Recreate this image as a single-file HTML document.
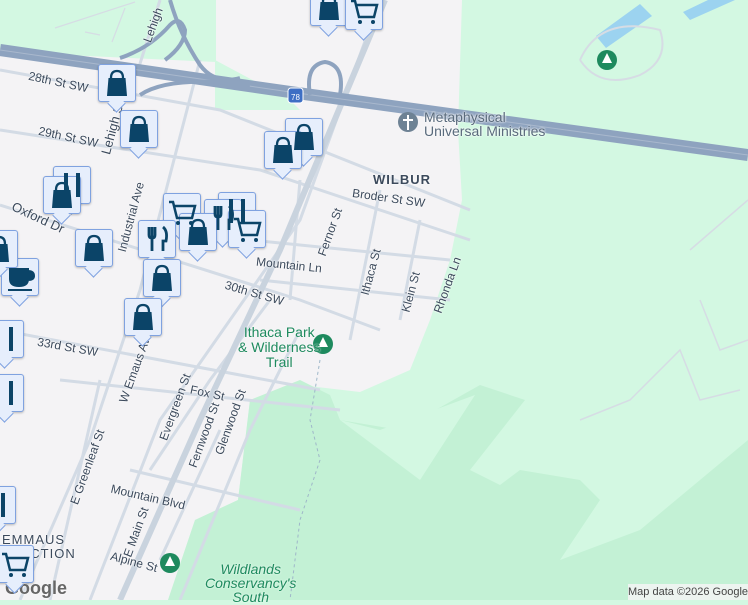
<!DOCTYPE html>
<html><head><meta charset="utf-8"><style>
body{margin:0;width:748px;height:600px;overflow:hidden;font-family:"Liberation Sans",sans-serif;position:relative;background:#d3f8e2}
svg{position:absolute;left:0;top:0}
.m{position:absolute;width:36px;height:36px;background:#e6eefc;border:1.5px solid #7fa2e0;border-radius:3px;box-shadow:0 1px 2px rgba(0,0,0,.25)}
.m:after{content:"";position:absolute;left:11px;bottom:-9px;width:12px;height:12px;background:#e6eefc;border-right:1.5px solid #7fa2e0;border-bottom:1.5px solid #7fa2e0;transform:rotate(45deg)}
.m svg{position:relative;z-index:2;left:0;top:0}
.lbl{position:absolute;font-size:12px;color:#3c4a5c;white-space:nowrap;text-shadow:0 0 2px #fff,0 0 2px #fff}
.g{color:#1e8a5e;font-size:14px;text-shadow:0 0 2px #fff}
</style></head><body>
<svg width="748" height="600">
<defs><symbol id="bag" viewBox="0 0 36 36"><path d="M12 13 Q12 6 18 6 Q24 6 24 13" fill="none" stroke="#0b4468" stroke-width="2.3"/><path d="M9.5 13 H26.5 L28 31 H8 Z" fill="#0b4468"/></symbol></defs>
<rect width="748" height="600" fill="#d3f8e2"/>
<path d="M0 50 L215 60 L215 0 L462 0 L458 130 L462 200 L450 260 L430 320 L410 370 L360 392 L300 385 L250 400 L238 500 L195 520 L168 600 L0 600 Z" fill="#f4f3f5"/>
<path d="M0 0 H216 V62 L0 52 Z" fill="#d3f8e2"/>
<path d="M215 60 L290 100 L300 110 L215 110 Z" fill="#d3f8e2"/>
<path d="M250 400 L300 380 L330 395 L340 420 L400 430 L480 385 L525 400 L470 470 L500 485 L520 470 L580 480 L600 500 L560 560 L640 530 L748 440 L748 600 L168 600 L195 520 L238 500 Z" fill="#c3f1d5"/>
<path d="M380 430 L475 395 L420 480 L340 420Z" fill="#d3f8e2"/>
<g stroke="#d6dce4" stroke-width="1.2" fill="none"><path d="M55 28 L135 2"/><path d="M125 8 L112 42"/><path d="M85 32 L100 35"/></g>
<g stroke="#d3dbe5" stroke-width="3" fill="none">
<path d="M0 70 L220 110 L470 210"/><path d="M0 130 L260 170 L470 240"/><path d="M0 205 L300 300 L380 330"/>
<path d="M0 330 L320 390"/><path d="M60 380 L340 410"/><path d="M130 470 L300 510"/>
<path d="M20 600 L90 440 L140 290 L200 60"/><path d="M90 600 L160 420 L300 220 L380 0"/>
<path d="M150 470 L210 380 L270 300"/><path d="M180 600 L250 430 L300 330"/>
<path d="M160 0 L138 70"/><path d="M300 180 L290 300"/><path d="M380 190 L350 340"/><path d="M420 220 L400 320"/>
<path d="M250 240 L450 260"/><path d="M260 280 L450 300"/><path d="M100 380 L50 600"/><path d="M220 430 L160 560"/>
</g>
<path d="M120 600 L200 420 L280 250 L385 0" stroke="#c9d3de" stroke-width="6" fill="none"/>
<path d="M0 50 L290 92 L748 155" stroke="#8ea3bf" stroke-width="12" fill="none"/>
<path d="M0 50 L290 92 L748 155" stroke="#a9b8cd" stroke-width="1" fill="none"/>
<path d="M170 0 Q180 35 200 65 Q215 85 240 78" stroke="#8ea3bf" stroke-width="4" fill="none"/>
<path d="M120 58 Q150 48 170 25 Q180 15 185 30 Q185 45 165 60" stroke="#8ea3bf" stroke-width="4" fill="none"/>
<path d="M310 95 Q305 65 325 62 Q345 65 340 95" stroke="#8ea3bf" stroke-width="4" fill="none"/>
<path d="M140 95 Q170 75 250 85" stroke="#8ea3bf" stroke-width="4" fill="none"/>
<path d="M596 36 L640 4 L652 16 L606 48Z" fill="#9cd3f0"/>
<path d="M683 12 L708 0 L735 0 L690 20Z" fill="#9cd3f0"/>
<path d="M580 60 Q600 15 660 30 Q670 60 640 75 Q600 90 580 60" stroke="#d6dce4" stroke-width="2" fill="none"/>
<g stroke="#d6dce4" stroke-width="1.5" fill="none"><path d="M580 420 L630 400 L680 350 L700 400 L740 390"/><path d="M700 300 L720 350 L748 340"/><path d="M690 250 L748 200"/></g>
<path d="M320 360 L310 420 L320 460 L300 520 L290 600" stroke="#9fb7c9" stroke-dasharray="3 3" fill="none"/>
<circle cx="408" cy="122" r="10" fill="#6e8294"/><path d="M408 115 V130 M403 120 H413" stroke="#fff" stroke-width="2"/>
<circle cx="607" cy="60" r="10" fill="#1e8a5e"/><path d="M607 53 L612 63 H602Z" fill="#fff"/>
<circle cx="323" cy="344" r="10" fill="#1e8a5e"/><path d="M323 337 L328 347 H318Z" fill="#fff"/>
<circle cx="170" cy="563" r="10" fill="#1e8a5e"/><path d="M170 556 L175 566 H165Z" fill="#fff"/>
<rect x="288" y="88" width="15" height="15" rx="3" fill="#3e6fc4" stroke="#fff"/><text x="295.5" y="100" font-size="8" fill="#fff" text-anchor="middle" font-family="Liberation Sans">78</text>
<rect x="628" y="584" width="120" height="16" fill="#f5f5f5" opacity=".85"/>
</svg>
<div class="lbl" style="left:424px;top:110px;font-size:14px;line-height:14px;color:#596a7c">Metaphysical<br>Universal Ministries</div>
<div class="lbl" style="left:373px;top:172px;font-size:13px;letter-spacing:1px;font-weight:bold;color:#3c4a5c">WILBUR</div>
<div class="lbl" style="left:352px;top:191px;transform:rotate(8deg)">Broder St SW</div>
<div class="lbl" style="left:256px;top:258px;transform:rotate(6deg)">Mountain Ln</div>
<div class="lbl" style="left:224px;top:286px;transform:rotate(16deg)">30th St SW</div>
<div class="lbl" style="left:28px;top:75px;transform:rotate(12deg)">28th St SW</div>
<div class="lbl" style="left:38px;top:130px;transform:rotate(12deg)">29th St SW</div>
<div class="lbl" style="left:10px;top:210px;transform:rotate(25deg);font-size:13px">Oxford Dr</div>
<div class="lbl" style="left:37px;top:340px;transform:rotate(10deg)">33rd St SW</div>
<div class="lbl" style="left:190px;top:386px;transform:rotate(12deg)">Fox St</div>
<div class="lbl" style="left:110px;top:490px;transform:rotate(13deg)">Mountain Blvd</div>
<div class="lbl" style="left:110px;top:555px;transform:rotate(15deg)">Alpine St</div>
<div class="lbl" style="left:98px;top:360px;transform:rotate(-70deg)">W Emaus Ave</div>
<div class="lbl" style="left:140px;top:400px;transform:rotate(-70deg)">Evergreen St</div>
<div class="lbl" style="left:170px;top:428px;transform:rotate(-70deg)">Fernwood St</div>
<div class="lbl" style="left:196px;top:415px;transform:rotate(-70deg)">Glenwood St</div>
<div class="lbl" style="left:48px;top:460px;transform:rotate(-70deg)">E Greenleaf St</div>
<div class="lbl" style="left:110px;top:525px;transform:rotate(-70deg)">E Main St</div>
<div class="lbl" style="left:305px;top:225px;transform:rotate(-70deg)">Fernor St</div>
<div class="lbl" style="left:347px;top:265px;transform:rotate(-75deg)">Ithaca St</div>
<div class="lbl" style="left:390px;top:285px;transform:rotate(-75deg)">Klein St</div>
<div class="lbl" style="left:418px;top:278px;transform:rotate(-70deg)">Rhonda Ln</div>
<div class="lbl" style="left:85px;top:120px;transform:rotate(-75deg);font-size:13px">Lehigh St</div>
<div class="lbl" style="left:95px;top:210px;transform:rotate(-75deg)">Industrial Ave</div>
<div class="lbl" style="left:135px;top:18px;transform:rotate(-70deg)">Lehigh</div>
<div class="lbl g" style="left:238px;top:325px;line-height:15px;text-align:center">Ithaca Park<br>&amp; Wilderness<br>Trail</div>
<div class="lbl g" style="left:205px;top:562px;line-height:14px;text-align:center;font-style:italic">Wildlands<br>Conservancy's<br>South</div>
<div class="lbl" style="left:2px;top:533px;font-size:13px;letter-spacing:1px;color:#3c4a5c;line-height:14px">EMMAUS<br>JUNCTION</div>
<div class="lbl" style="left:5px;top:578px;font-size:18px;font-weight:bold;color:#666;text-shadow:0 0 2px #fff">Google</div>
<div class="lbl" style="left:628px;top:586px;font-size:11px;color:#444;text-shadow:none">Map data ©2026 Google</div>

<div class="m" style="left:310px;top:-12px"><svg width="36" height="36"><use href="#bag"/></svg></div>
<div class="m" style="left:345px;top:-8px"><svg width="36" height="36"><path d="M5 8 H9 L13 24 H28 L31 12 H10" fill="none" stroke="#0b4468" stroke-width="2.5"/><circle cx="14" cy="29" r="2" fill="#0b4468"/><circle cx="27" cy="29" r="2" fill="#0b4468"/></svg></div>
<div class="m" style="left:98px;top:64px"><svg width="36" height="36"><use href="#bag"/></svg></div>
<div class="m" style="left:120px;top:110px"><svg width="36" height="36"><use href="#bag"/></svg></div>
<div class="m" style="left:285px;top:118px"><svg width="36" height="36"><use href="#bag"/></svg></div>
<div class="m" style="left:264px;top:131px"><svg width="36" height="36"><use href="#bag"/></svg></div>
<div class="m" style="left:53px;top:166px"><svg width="36" height="36"><path d="M12 6 V30 M24 6 V30" stroke="#0b4468" stroke-width="4"/></svg></div>
<div class="m" style="left:43px;top:176px"><svg width="36" height="36"><use href="#bag"/></svg></div>
<div class="m" style="left:163px;top:193px"><svg width="36" height="36"><path d="M5 8 H9 L13 24 H28 L31 12 H10" fill="none" stroke="#0b4468" stroke-width="2.5"/><circle cx="14" cy="29" r="2" fill="#0b4468"/><circle cx="27" cy="29" r="2" fill="#0b4468"/></svg></div>
<div class="m" style="left:218px;top:192px"><svg width="36" height="36"><path d="M12 6 V30 M24 6 V30" stroke="#0b4468" stroke-width="4"/></svg></div>
<div class="m" style="left:204px;top:199px"><svg width="36" height="36"><path d="M10 6 V14 Q10 17 13 17 Q16 17 16 14 V6 M13 6 V30 M24 6 Q29 10 27 20 H24 V30" fill="none" stroke="#0b4468" stroke-width="2.8"/></svg></div>
<div class="m" style="left:138px;top:220px"><svg width="36" height="36"><path d="M10 6 V14 Q10 17 13 17 Q16 17 16 14 V6 M13 6 V30 M24 6 Q29 10 27 20 H24 V30" fill="none" stroke="#0b4468" stroke-width="2.8"/></svg></div>
<div class="m" style="left:179px;top:213px"><svg width="36" height="36"><use href="#bag"/></svg></div>
<div class="m" style="left:228px;top:210px"><svg width="36" height="36"><path d="M5 8 H9 L13 24 H28 L31 12 H10" fill="none" stroke="#0b4468" stroke-width="2.5"/><circle cx="14" cy="29" r="2" fill="#0b4468"/><circle cx="27" cy="29" r="2" fill="#0b4468"/></svg></div>
<div class="m" style="left:75px;top:229px"><svg width="36" height="36"><use href="#bag"/></svg></div>
<div class="m" style="left:143px;top:259px"><svg width="36" height="36"><use href="#bag"/></svg></div>
<div class="m" style="left:124px;top:298px"><svg width="36" height="36"><use href="#bag"/></svg></div>
<div class="m" style="left:1px;top:258px"><svg width="36" height="36"><path d="M8 10 H26 V20 Q26 27 17 27 Q8 27 8 20Z M26 12 Q32 12 32 17 Q32 21 26 21" fill="#0b4468" stroke="#0b4468" stroke-width="2"/><path d="M6 31 H30" stroke="#0b4468" stroke-width="2"/></svg></div>
<div class="m" style="left:-20px;top:230px"><svg width="36" height="36"><use href="#bag"/></svg></div>
<div class="m" style="left:-14px;top:320px"><svg width="36" height="36"><path d="M24 6 V30" stroke="#0b4468" stroke-width="4"/></svg></div>
<div class="m" style="left:-14px;top:374px"><svg width="36" height="36"><path d="M24 6 V30" stroke="#0b4468" stroke-width="4"/></svg></div>
<div class="m" style="left:-22px;top:486px"><svg width="36" height="36"><path d="M24 6 V30" stroke="#0b4468" stroke-width="4"/></svg></div>
<div class="m" style="left:-4px;top:545px"><svg width="36" height="36"><path d="M5 8 H9 L13 24 H28 L31 12 H10" fill="none" stroke="#0b4468" stroke-width="2.5"/><circle cx="14" cy="29" r="2" fill="#0b4468"/><circle cx="27" cy="29" r="2" fill="#0b4468"/></svg></div>
</body></html>
